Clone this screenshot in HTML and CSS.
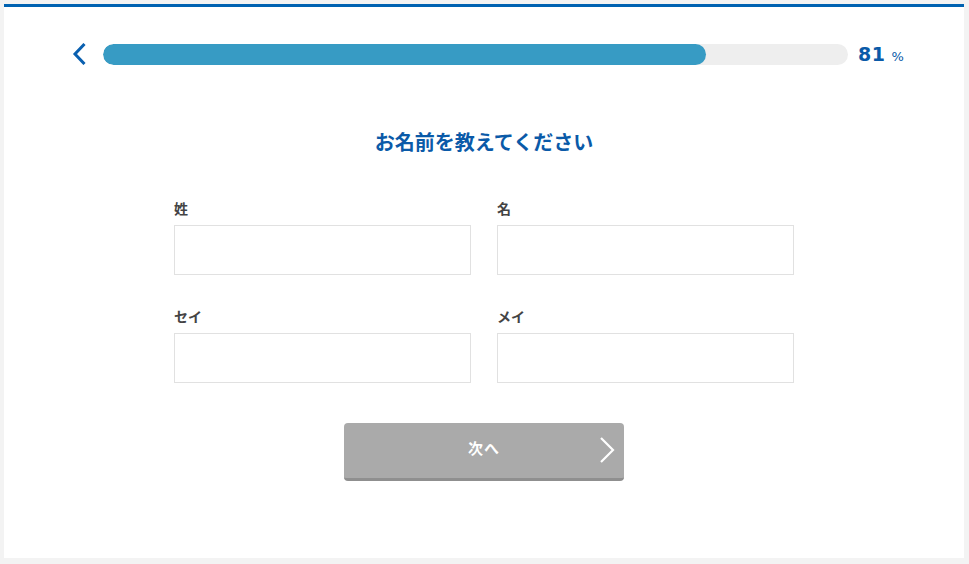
FILE: index.html
```html
<!DOCTYPE html>
<html lang="ja">
<head>
<meta charset="utf-8">
<title>お名前を教えてください</title>
<link rel="stylesheet" href="styles.css">
</head>
<body>
<div class="card">
  <div class="progress-row">
    <a class="back" href="#" aria-label="戻る">
      <svg width="14" height="22" viewBox="0 0 14 22"><path d="M12.5 1 L3 11 L12.5 21" fill="none" stroke="#0a60b0" stroke-width="3"/></svg>
    </a>
    <div class="track"><div class="fill" style="width:81%"></div></div>
    <div class="pct"><span class="num">81</span><span class="unit">%</span></div>
  </div>
  <h1 class="title">お名前を教えてください</h1>
  <form class="form">
    <div class="grid">
      <label class="field"><span class="label">姓</span><input class="input" type="text"></label>
      <label class="field"><span class="label">名</span><input class="input" type="text"></label>
      <label class="field"><span class="label">セイ</span><input class="input" type="text"></label>
      <label class="field"><span class="label">メイ</span><input class="input" type="text"></label>
    </div>
    <button class="next" type="button">
      <span class="next-text">次へ</span>
      <svg class="next-arrow" width="16" height="26" viewBox="0 0 16 26"><path d="M2 1 L14 13 L2 25" fill="none" stroke="#fff" stroke-width="2.2"/></svg>
    </button>
  </form>
</div>
</body>
</html>
```

FILE: styles.css
```css
* { box-sizing: border-box; }
html, body { margin: 0; padding: 0; }
body {
  background: #f3f3f3;
  padding: 4px 5px 6px 4px;
  font-family: "Noto Sans CJK JP", "Noto Sans", sans-serif;
  color: #444;
}
.card {
  width: 960px;
  height: 554px;
  background: #fff;
  border-top: 3px solid #0062b1;
}
.progress-row {
  display: flex;
  align-items: center;
  margin-top: 36px;
  padding-left: 68px;
  height: 22px;
}
.back { display: flex; width: 14px; height: 22px; }
.track {
  margin-left: 17px;
  width: 745px;
  height: 21px;
  border-radius: 11px;
  background: #eeeeee;
  overflow: hidden;
}
.fill {
  height: 100%;
  background: #379bc4;
  border-radius: 11px;
}
.pct {
  margin-left: 10px;
  color: #0a5aa8;
  font-family: "DejaVu Sans", sans-serif;
  font-weight: bold;
  display: flex;
  align-items: baseline;
}
.num { font-size: 19px; letter-spacing: 0.5px; }
.unit { font-size: 13px; font-weight: normal; margin-left: 6px; font-family: "DejaVu Sans", sans-serif; }
.title {
  margin: 65px 0 0;
  text-align: center;
  font-size: 20px;
  line-height: 24px;
  font-weight: bold;
  color: #0a5aa8;
}
.form {
  width: 620px;
  margin: 44px auto 0;
  display: flex;
  flex-direction: column;
  align-items: center;
}
.grid {
  width: 620px;
  display: grid;
  grid-template-columns: 297px 297px;
  column-gap: 26px;
  row-gap: 31px;
}
.field { display: flex; flex-direction: column; }
.label {
  font-size: 14px;
  line-height: 20px;
  font-weight: bold;
  color: #444;
  margin-bottom: 7px;
}
.input {
  height: 50px;
  border: 1px solid #e1e1e1;
  background: #fff;
  margin: 0;
  padding: 0 10px;
  font-size: 15px;
  outline: none;
}
.next {
  margin-top: 40px;
  width: 280px;
  height: 58px;
  border: 0;
  border-bottom: 3px solid #8f8f8f;
  border-radius: 4px;
  background: #aaaaaa;
  display: flex;
  align-items: center;
  justify-content: center;
  position: relative;
  padding: 0 0 6px;
  cursor: pointer;
}
.next-text {
  color: #fff;
  font-family: "Noto Sans CJK JP", sans-serif;
  font-weight: bold;
  font-size: 15px;
  letter-spacing: 1px;
}
.next-arrow {
  position: absolute;
  right: 9px;
  top: 14px;
}
```
